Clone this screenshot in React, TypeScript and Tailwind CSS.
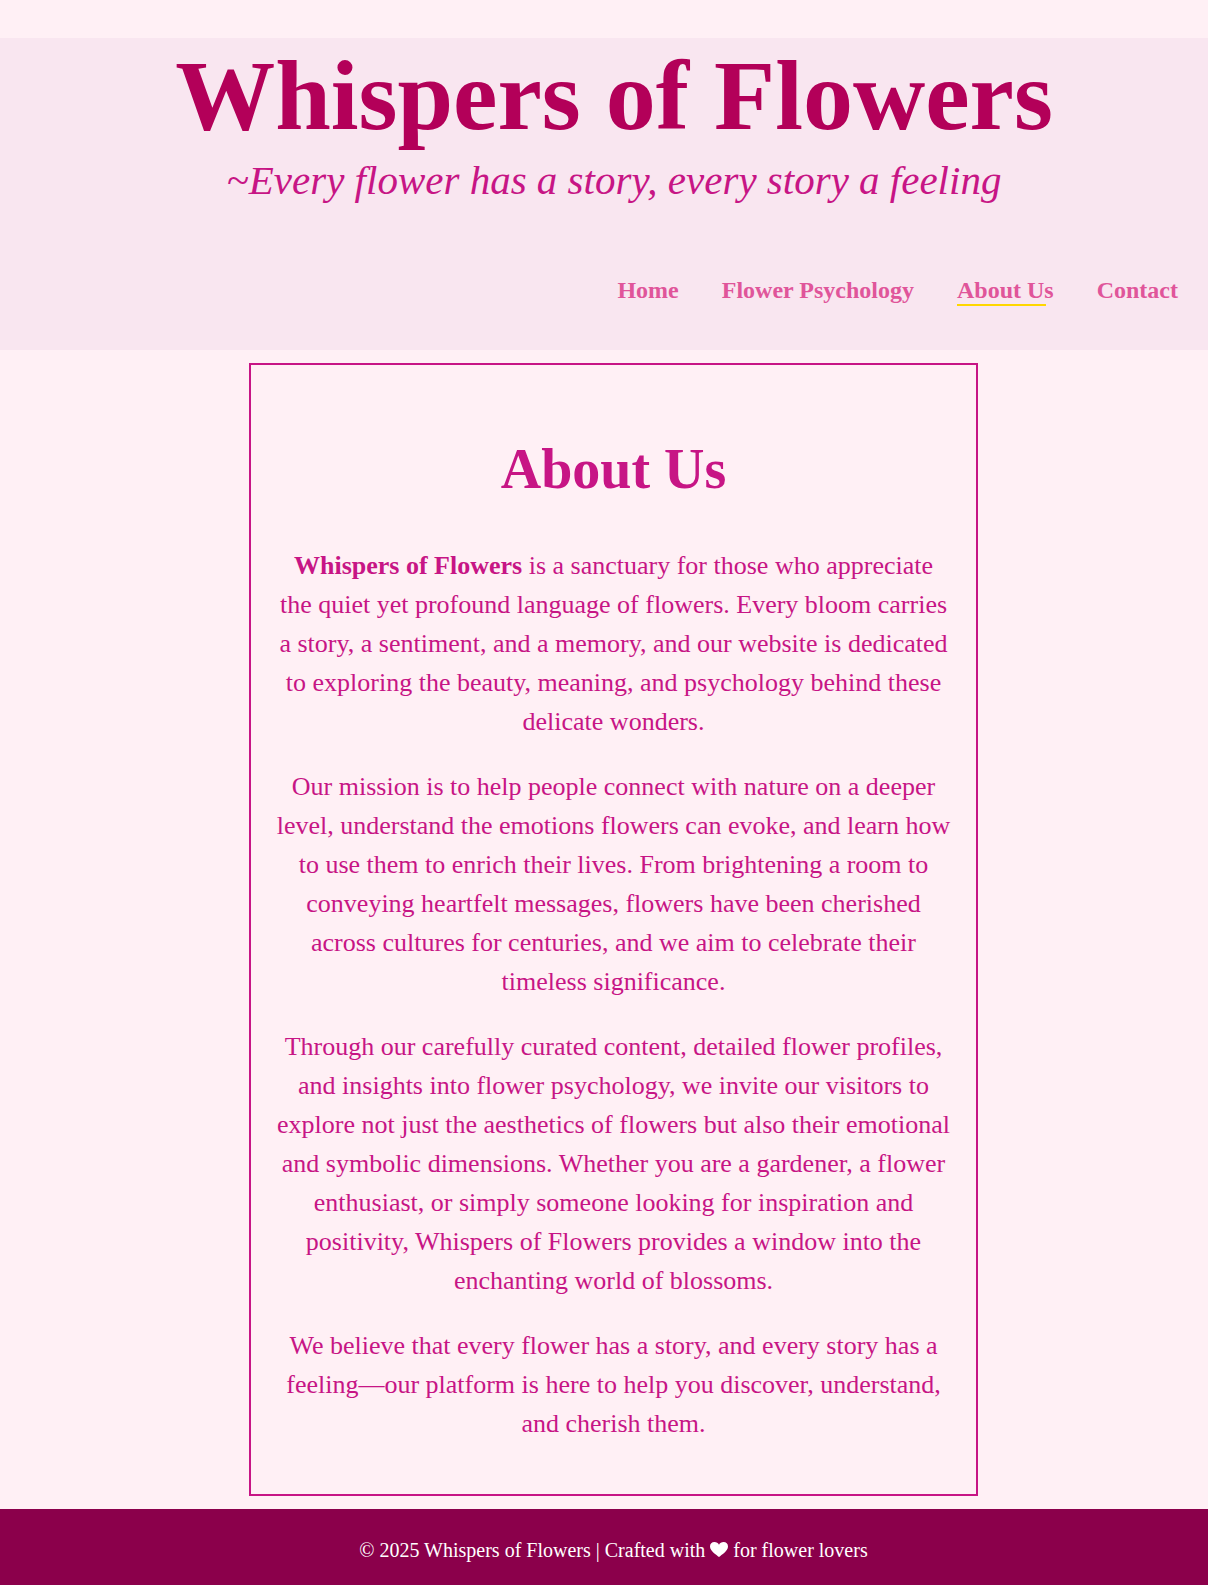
const links = [
  { label: "Home", href: "#home" },
  { label: "Flower Psychology", href: "#psychology" },
  { label: "About Us", href: "#about", current: true },
  { label: "Contact", href: "#contact" },
];

function Header() {
  return (
    <header className="bg-[#f9e6f0] pb-11">
      <div className="pl-5 text-center">
        <h1 className="text-[100px] leading-[116px] font-bold text-[#b30059]">Whispers of Flowers</h1>
        <p className="text-[41px] leading-[52px] text-[#c71585] italic">
          ~Every flower has a story, every story a feeling
        </p>
      </div>
      <nav aria-label="Main" className="mt-[70px] pr-[30px]">
        <ul className="flex flex-wrap justify-end gap-x-[43px]">
          {links.map((link) => (
            <li key={link.label}>
              <a
                href={link.href}
                aria-current={link.current ? "page" : undefined}
                className="block text-[24px] leading-[28px] font-bold text-[#e0559a]"
              >
                {link.label}
                {link.current && <span className="block h-[2px] w-11/12 bg-[#ffd700]" />}
              </a>
            </li>
          ))}
        </ul>
      </nav>
    </header>
  );
}

function About() {
  return (
    <main className="py-[13px] pl-[19px]">
      <section
        id="about"
        className="mx-auto max-w-[729px] border-2 border-[#c71585] px-6 pt-[62px] pb-[51px] text-center text-[26px] leading-[39px] text-[#c71585]"
      >
        <h2 className="mb-[35px] text-[56px] leading-[84px] font-bold">About Us</h2>
        <div className="flex flex-col gap-[26px]">
          <p>
            <strong>Whispers of Flowers</strong> is a sanctuary for those who appreciate the quiet yet profound
            language of flowers. Every bloom carries a story, a sentiment, and a memory, and our website is
            dedicated to exploring the beauty, meaning, and psychology behind these delicate wonders.
          </p>
          <p>
            Our mission is to help people connect with nature on a deeper level, understand the emotions flowers
            can evoke, and learn how to use them to enrich their lives. From brightening a room to conveying
            heartfelt messages, flowers have been cherished across cultures for centuries, and we aim to
            celebrate their timeless significance.
          </p>
          <p>
            Through our carefully curated content, detailed flower profiles, and insights into flower psychology,
            we invite our visitors to explore not just the aesthetics of flowers but also their emotional and
            symbolic dimensions. Whether you are a gardener, a flower enthusiast, or simply someone looking for
            inspiration and positivity, Whispers of Flowers provides a window into the enchanting world of
            blossoms.
          </p>
          <p>
            We believe that every flower has a story, and every story has a feeling—our platform is here to help
            you discover, understand, and cherish them.
          </p>
        </div>
      </section>
    </main>
  );
}

function Footer() {
  return (
    <footer className="bg-[#8b004b] pt-[26px] pb-5 pl-[19px] text-center text-[20px] leading-[30px] text-white">
      <p>
        © 2025 Whispers of Flowers | Crafted with{" "}
        <svg
          role="img"
          aria-label="love"
          viewBox="0 0 18 15"
          className="inline-block h-[15px] w-[18px] align-baseline"
          fill="currentColor"
        >
          <path d="M9 15C6.5 12.6 0 9.2 0 4.4 0 1.8 1.9 0 4.4 0 6.5 0 8.2 1.1 9 2.7 9.8 1.1 11.5 0 13.6 0 16.1 0 18 1.8 18 4.4 18 9.2 11.5 12.6 9 15Z" />
        </svg>{" "}
        for flower lovers
      </p>
    </footer>
  );
}

export default function App() {
  return (
    <div className="min-h-screen bg-[#fff0f5] pt-[38px] font-['Liberation_Serif','Times_New_Roman',serif]">
      <Header />
      <About />
      <Footer />
    </div>
  );
}
